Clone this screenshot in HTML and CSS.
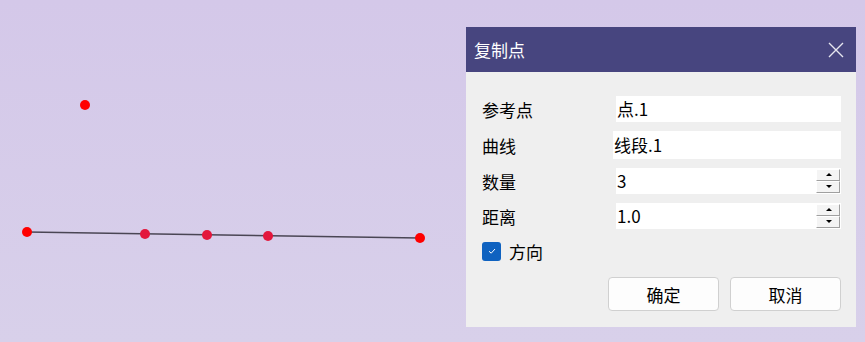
FILE: index.html
```html
<!DOCTYPE html>
<html lang="zh">
<head>
    <meta charset="UTF-8">
    <meta name="viewport" content="width=device-width, initial-scale=1.0">
    <title>复制点</title>
    <link rel="stylesheet" href="styles.css">
</head>
<body>
    <div class="scene">
        <svg class="canvas" width="865" height="342" viewBox="0 0 865 342">
            <line x1="27" y1="232" x2="420" y2="238" stroke="#4a4654" stroke-width="1.5"/>
            <circle cx="85" cy="105" r="5" fill="#ff0000"/>
            <circle cx="27" cy="232" r="5" fill="#ff0000"/>
            <circle cx="145" cy="234" r="5" fill="#e3173c"/>
            <circle cx="207" cy="235" r="5" fill="#e3173c"/>
            <circle cx="268" cy="236" r="5" fill="#e3173c"/>
            <circle cx="420" cy="238" r="5" fill="#ff0000"/>
        </svg>

        <div class="dialog">
            <div class="titlebar">
                <span class="title">复制点</span>
                <svg class="close" width="16" height="16" viewBox="0 0 16 16">
                    <path d="M1 1 L15 15 M15 1 L1 15" stroke="#e6e6ef" stroke-width="1.4" fill="none"/>
                </svg>
            </div>
            <div class="body">
                <div class="row">
                    <label>参考点</label>
                    <div class="field">点.1</div>
                </div>
                <div class="row">
                    <label>曲线</label>
                    <div class="field wide">线段.1</div>
                </div>
                <div class="row">
                    <label>数量</label>
                    <div class="field spin">
                        <span>3</span>
                        <div class="arrows">
                            <div class="arrow up"></div>
                            <div class="arrow down"></div>
                        </div>
                    </div>
                </div>
                <div class="row">
                    <label>距离</label>
                    <div class="field spin">
                        <span>1.0</span>
                        <div class="arrows">
                            <div class="arrow up"></div>
                            <div class="arrow down"></div>
                        </div>
                    </div>
                </div>
                <div class="check">
                    <div class="box">
                        <svg width="10" height="10" viewBox="0 0 10 10">
                            <path d="M2 5.2 L4.2 7.2 L8 3" stroke="#fff" stroke-width="1" fill="none"/>
                        </svg>
                    </div>
                    <span>方向</span>
                </div>
                <div class="buttons">
                    <button type="button">确定</button>
                    <button type="button">取消</button>
                </div>
            </div>
        </div>
    </div>
</body>
</html>
```

FILE: styles.css
```css
body {
    margin: 0;
    padding: 0;
    font-family: "Noto Sans CJK SC", "Liberation Sans", sans-serif;
    background: #d6cbea;
}
.scene {
    position: relative;
    width: 865px;
    height: 342px;
    overflow: hidden;
    background: linear-gradient(#d4c8e9, #d8d0ea);
}
.canvas {
    position: absolute;
    left: 0;
    top: 0;
}
.dialog {
    position: absolute;
    left: 466px;
    top: 27px;
    width: 390px;
    height: 300px;
    background-color: #efefef;
    display: flex;
    flex-direction: column;
}
.titlebar {
    height: 45px;
    background-color: #47457f;
    display: flex;
    align-items: center;
    justify-content: space-between;
    padding: 0 12px 0 8px;
}
.title {
    color: #fff;
    font-size: 17px;
}
.close {
    display: block;
}
.body {
    padding: 24px 15px 0 16px;
}
.row {
    display: flex;
    align-items: center;
    margin-bottom: 9px;
}
.row label {
    width: 134px;
    font-size: 17px;
    color: #000;
}
.field {
    width: 225px;
    height: 26px;
    background: #fff;
    font-size: 17px;
    line-height: 26px;
    padding-left: 1px;
    box-sizing: border-box;
    color: #000;
}
.field.wide {
    margin-left: -3px;
    width: 228px;
    height: 28px;
    line-height: 28px;
}
.spin {
    display: flex;
    justify-content: space-between;
    align-items: center;
}
.arrows {
    display: flex;
    flex-direction: column;
    margin-right: 1px;
}
.arrow {
    width: 22px;
    height: 10px;
    background: #f4f4f4;
    border-top: 1px solid #fff;
    border-left: 1px solid #fff;
    border-right: 1px solid #a0a0a0;
    border-bottom: 1px solid #a0a0a0;
    position: relative;
}
.arrow::after {
    content: "";
    position: absolute;
    left: 9px;
    top: 3px;
    border-left: 3px solid transparent;
    border-right: 3px solid transparent;
}
.arrow.up::after {
    border-bottom: 3px solid #000;
}
.arrow.down::after {
    border-top: 3px solid #000;
}
.check {
    display: flex;
    align-items: center;
    height: 26px;
    gap: 8px;
}
.box {
    width: 19px;
    height: 19px;
    border-radius: 3px;
    background: #0f62c0;
    display: flex;
    align-items: center;
    justify-content: center;
}
.check span {
    font-size: 17px;
}
.buttons {
    display: flex;
    justify-content: flex-end;
    gap: 11px;
    margin-top: 13px;
}
button {
    width: 111px;
    height: 34px;
    background-color: #fdfdfd;
    border: 1px solid #d0d0d0;
    border-radius: 4px;
    font-family: "Noto Sans CJK SC", sans-serif;
    font-size: 17px;
    color: #000;
    padding: 0;
}
```
